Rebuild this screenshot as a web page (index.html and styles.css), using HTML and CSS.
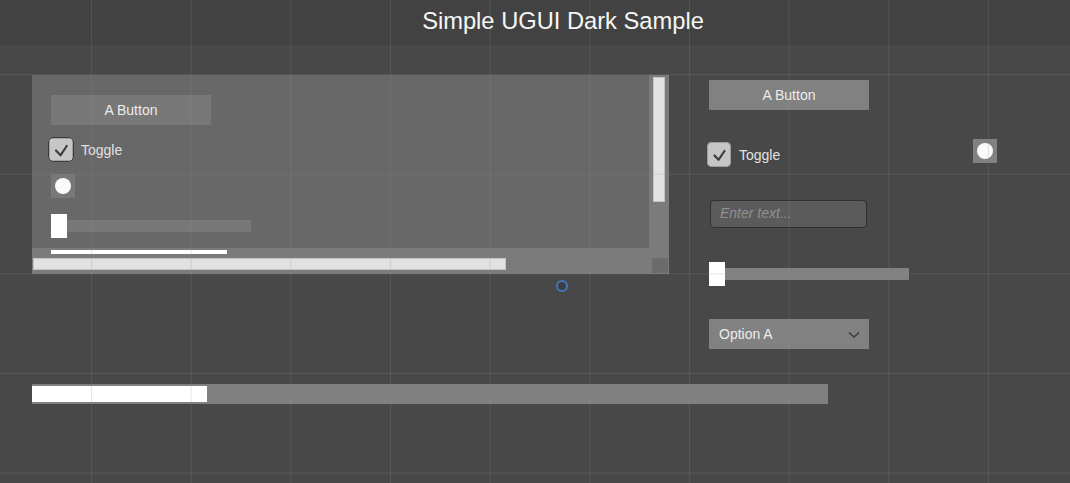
FILE: index.html
```html
<!DOCTYPE html>
<html>
<head>
<meta charset="utf-8">
<link rel="stylesheet" href="styles.css">
</head>
<body>
<header class="header"><h1 class="title">Simple UGUI Dark Sample</h1></header>
<main class="main">
  <div class="row">
    <section class="scroll">
      <div class="viewport">
        <div class="btn btn-in">A Button</div>
        <div class="toggle">
          <span class="check check-dark"><svg width="26" height="25" viewBox="0 0 26 25"><path d="M8 13.5 L12.5 18.3 L18.7 9" fill="none" stroke="#3e3e3e" stroke-width="2.2" stroke-linecap="round" stroke-linejoin="round"/></svg></span>
          <span class="label">Toggle</span>
        </div>
        <div class="radio radio-in"><span class="dot"></span></div>
        <div class="slider slider-in"><span class="knob"></span><span class="track track-in"></span></div>
      </div>
      <div class="vbar"><div class="vhandle"></div></div>
      <div class="hbar">
        <div class="clipbar"></div>
        <div class="hhandle"></div>
      </div>
      <div class="corner"><div class="corner-sq"></div></div>
    </section>
    <aside class="col">
      <div class="btn btn-out">A Button</div>
      <div class="toggle-row">
        <div class="toggle">
          <span class="check check-light"><svg width="24" height="25" viewBox="0 0 24 25"><path d="M7.5 13.5 L11.5 17.8 L17.5 9" fill="none" stroke="#3e3e3e" stroke-width="2.2" stroke-linecap="round" stroke-linejoin="round"/></svg></span>
          <span class="label">Toggle</span>
        </div>
        <div class="radio radio-out"><span class="dot"></span></div>
      </div>
      <div class="input"><span class="placeholder">Enter text...</span></div>
      <div class="slider slider-out"><span class="knob"></span><span class="track track-out"></span></div>
      <div class="dropdown"><span class="option">Option A</span><svg class="chev" width="12" height="8" viewBox="0 0 12 8"><path d="M1 1.5 L6 6 L11 1.5" fill="none" stroke="#3a3a3a" stroke-width="1.6"/></svg></div>
    </aside>
  </div>
  <div class="pbar"><div class="pfill"></div></div>
</main>
<div class="gizmo"></div>
<div class="grid-overlay"></div>
</body>
</html>
```
FILE: styles.css
```css
* { box-sizing: border-box; }
html, body { margin: 0; padding: 0; }
body {
  width: 1070px;
  height: 483px;
  overflow: hidden;
  background: #484848;
  font-family: "Liberation Sans", Arial, sans-serif;
  color: #e6e6e6;
  position: relative;
}
.header {
  height: 45px;
  background: #424242;
  padding-left: 56px;
}
.title {
  margin: 0;
  padding-top: 9px;
  font-size: 23.7px;
  line-height: 24px;
  font-weight: normal;
  text-align: center;
  color: #f6f6f6;
}
.main {
  padding: 30px 0 0 32px;
}
.row {
  display: flex;
  align-items: flex-start;
}
.scroll {
  width: 637px;
  height: 199px;
  background: #7b7b7b;
  display: grid;
  grid-template-columns: 617px 20px;
  grid-template-rows: 173px 26px;
}
.viewport {
  background: #686868;
  padding: 20px 0 0 16px;
  overflow: hidden;
  display: flex;
  flex-direction: column;
  align-items: flex-start;
}
.btn {
  width: 160px;
  height: 30px;
  display: flex;
  align-items: center;
  justify-content: center;
  font-size: 14px;
  color: #ececec;
}
.btn-in { background: #787878; margin-left: 3px; }
.btn-out { background: #818181; margin: 5px 0 0 2px; }
.toggle {
  display: flex;
  align-items: center;
}
.viewport .toggle { margin-top: 12px; }
.check {
  display: block;
  background: #c6c6c6;
  border-radius: 5px;
}
.check svg { display: block; }
.check-dark {
  width: 26px;
  height: 25px;
  box-shadow: inset 0 0 0 1.3px #3d3d3d;
}
.check-light {
  width: 24px;
  height: 25px;
  box-shadow: inset 0 0 0 1px #9e9e9e;
}
.label {
  font-size: 14px;
  color: #e2e2e2;
}
.check-dark + .label { margin-left: 7px; }
.check-light + .label { margin-left: 8px; }
.radio {
  width: 24px;
  height: 24px;
  display: flex;
  align-items: center;
  justify-content: center;
}
.radio-in { background: #787878; margin: 12px 0 0 3px; }
.radio-out { background: #818181; margin-top: -3px; }
.dot {
  width: 16px;
  height: 16px;
  border-radius: 50%;
  background: #fafafa;
}
.slider {
  display: flex;
  align-items: center;
}
.slider-in { margin: 16px 0 0 3px; }
.slider-out { margin: 34px 0 0 2px; }
.knob {
  width: 16px;
  height: 24px;
  background: #ffffff;
}
.track {
  width: 184px;
  height: 12px;
}
.track-in { background: #787878; }
.track-out { background: #818181; }
.vbar {
  grid-row: 1;
  grid-column: 2;
  padding: 2px 4px 0 4px;
}
.vhandle {
  width: 12px;
  height: 125px;
  background: #e2e2e2;
  box-shadow: inset 0 0 0 1px #c4c4c4;
}
.hbar {
  grid-row: 2;
  grid-column: 1;
  padding: 2px 0 0 1px;
}
.clipbar {
  width: 176px;
  height: 4px;
  margin-left: 18px;
  background: #ffffff;
}
.hhandle {
  width: 473px;
  height: 12px;
  margin-top: 4px;
  background: #e2e2e2;
  box-shadow: inset 0 0 0 1px #c4c4c4;
}
.corner {
  grid-row: 2;
  grid-column: 2;
  padding: 10px 1px 0 3px;
}
.corner-sq {
  width: 16px;
  height: 15px;
  background: #6b6b6b;
}
.col {
  width: 290px;
  margin-left: 38px;
  display: flex;
  flex-direction: column;
  align-items: flex-start;
}
.toggle-row {
  width: 290px;
  margin-top: 32px;
  display: flex;
  justify-content: space-between;
  align-items: flex-start;
}
.input {
  width: 157px;
  height: 28px;
  margin: 33px 0 0 3px;
  background: #5b5b5b;
  border: 1px solid #303030;
  border-radius: 4px;
  padding-left: 9px;
  display: flex;
  align-items: center;
}
.placeholder {
  font-size: 14px;
  font-style: italic;
  color: #909090;
  margin-top: -3px;
}
.dropdown {
  width: 160px;
  height: 30px;
  margin: 33px 0 0 2px;
  background: #818181;
  display: flex;
  align-items: center;
  justify-content: space-between;
  padding: 0 9px 0 10px;
}
.option {
  font-size: 14px;
  color: #ececec;
}
.chev { display: block; margin-top: 1px; }
.pbar {
  width: 796px;
  height: 20px;
  margin-top: 35px;
  background: #808080;
  padding: 2px 0;
}
.pfill {
  width: 175px;
  height: 16px;
  background: #ffffff;
}
.gizmo {
  position: absolute;
  left: 556px;
  top: 280px;
  width: 12px;
  height: 12px;
  border-radius: 50%;
  border: 2px solid #4675b4;
  background: #3a3f47;
}
.grid-overlay {
  position: absolute;
  left: 0;
  top: 0;
  width: 1070px;
  height: 483px;
  pointer-events: none;
  background-image:
    linear-gradient(to right, rgba(140,140,140,0.22) 1px, transparent 1px),
    linear-gradient(to bottom, rgba(140,140,140,0.22) 1px, transparent 1px);
  background-size: 99.67px 100%, 100% 99.67px;
  background-position: 91px 0, 0 74px;
}
```
